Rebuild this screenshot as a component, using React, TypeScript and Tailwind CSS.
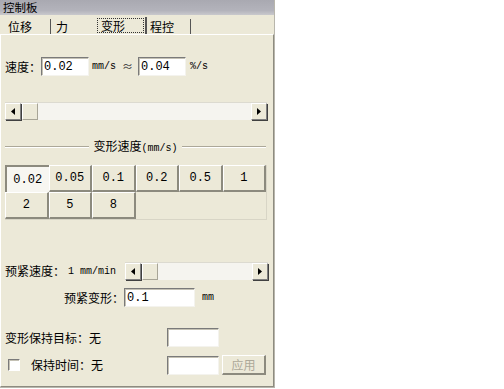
import React from "react";

const cjk = { fontFamily: '"Noto Sans CJK SC", "Liberation Sans", sans-serif' };
const mono = { fontFamily: '"Liberation Mono", "DejaVu Sans Mono", monospace' };

function Input({ w, value }: { w: string; value?: string }) {
  return (
    <div
      className={`${w} shrink-0 h-[19px] bg-white border-t border-l border-t-[#7a7a7a] border-l-[#7a7a7a] border-b border-r border-b-[#f4f3ee] border-r-[#f4f3ee] shadow-[inset_1px_1px_0_#c4c1b4] flex items-center pl-[2px] text-[12px] text-black leading-none`}
      style={mono}
    >
      {value}
    </div>
  );
}

function Arrow({ dir }: { dir: "left" | "right" }) {
  return (
    <div className="w-[16px] h-full bg-[#ece9d8] border-t border-l border-t-white border-l-white border-b border-r border-b-[#808080] border-r-[#808080] shadow-[1px_1px_0_#404040] flex items-center justify-center">
      <svg width="4" height="7" viewBox="0 0 4 7">
        {dir === "left" ? (
          <polygon points="4,0 4,7 0,3.5" fill="#000" />
        ) : (
          <polygon points="0,0 0,7 4,3.5" fill="#000" />
        )}
      </svg>
    </div>
  );
}

function ScrollBar({ w }: { w: string }) {
  return (
    <div className={`${w} shrink-0 h-[18px] flex bg-[#f5f4ef] border-t border-t-[#dcdad0]`}>
      <Arrow dir="left" />
      <div className="w-[16px] h-full ml-[1px] bg-[#ece9d8] border-t border-l border-t-white border-l-white border-b border-r border-b-[#a8a597] border-r-[#a8a597]" />
      <div className="flex-1" />
      <Arrow dir="right" />
    </div>
  );
}

function GridBtn({ label, selected }: { label: string; selected?: boolean }) {
  return (
    <div
      className={
        selected
          ? "h-[27px] bg-[#f7f6f1] border-t-2 border-l-2 border-t-[#8c8a7e] border-l-[#8c8a7e] flex items-center justify-center text-[12px] text-black"
          : "h-[27px] bg-[#ece9d8] border-t border-l border-t-white border-l-white border-b-2 border-r-2 border-b-[#8c8a7e] border-r-[#8c8a7e] flex items-center justify-center text-[12px] text-black"
      }
      style={mono}
    >
      {label}
    </div>
  );
}

export default function App() {
  const vals = ["0.02", "0.05", "0.1", "0.2", "0.5", "1", "2", "5", "8"];
  return (
    <div className="w-[504px] h-[389px] bg-white relative" style={cjk}>
      <div className="w-[275px] h-[388px] bg-[#ece9d8] flex flex-col border-r border-r-[#b8b6ac] border-b border-b-[#b8b6ac]">
        {/* title */}
        <div className="h-[15px] bg-[linear-gradient(#a9a9b1_0%,#b3b3bb_70%,#c9c9cd_100%)] flex items-center pl-[3px] text-[11.5px] leading-[15px] text-black whitespace-nowrap">
          控制板
        </div>
        {/* tabs */}
        <div className="h-[19px] flex items-end text-[12px] leading-none text-black pl-[3px] whitespace-nowrap">
          <div className="w-[48px] h-[15px] flex items-center pl-[5px] border-r border-r-[#555]">位移</div>
          <div className="w-[44px] h-[15px] flex items-center pl-[5px]">力</div>
          <div className="w-[52px] h-[17px] flex items-center border-r-2 border-r-[#555] pl-[2px]">
            <div className="h-[15px] w-[47px] border border-dotted border-[#333] flex items-center pl-[3px]">变形</div>
          </div>
          <div className="w-[44px] h-[15px] flex items-center pl-[3px] border-r border-r-[#555]">程控</div>
        </div>
        {/* content */}
        <div className="flex-1 border-t border-t-white border-l border-l-white border-b border-b-[#8d8b80] border-r border-r-[#8d8b80] flex flex-col pl-[4px] text-[12px] text-black whitespace-nowrap">
          {/* speed row */}
          <div className="mt-[22px] flex items-center h-[19px]">
            <span className="w-[36px] shrink-0">速度：</span>
            <Input w="w-[48px]" value="0.02" />
            <span className="ml-[3px] text-[10px]" style={mono}>mm/s</span>
            <span className="ml-[6px] text-[11px] text-[#333]">≈</span>
            <span className="ml-[5px]" />
            <Input w="w-[48px]" value="0.04" />
            <span className="ml-[4px] text-[10px]" style={mono}>%/s</span>
          </div>
          <div className="mt-[26px]">
            <ScrollBar w="w-[262px]" />
          </div>
          {/* group label */}
          <div className="mt-[20px] w-[261px] h-[14px] flex items-center">
            <div className="flex-1 h-[2px] border-t border-t-[#aca899] border-b border-b-white" />
            <span className="px-[4px] leading-none">
              变形速度<span className="text-[10px]" style={mono}>(mm/s)</span>
            </span>
            <div className="flex-1 h-[2px] border-t border-t-[#aca899] border-b border-b-white" />
          </div>
          {/* grid */}
          <div className="mt-[11px] w-[262px] grid grid-cols-6 border-r border-r-[#d8d5c6] border-b border-b-[#d8d5c6]">
            {vals.map((v, i) => (
              <GridBtn key={v} label={v} selected={i === 0} />
            ))}
          </div>
          {/* prestress speed */}
          <div className="mt-[42px] flex items-center h-[18px]">
            <span className="w-[63px] shrink-0">预紧速度：</span>
            <span className="w-[57px] shrink-0 text-[10px]" style={mono}>1 mm/min</span>
            <ScrollBar w="w-[143px]" />
          </div>
          <div className="mt-[8px] flex items-center h-[19px]">
            <span className="ml-[59px] w-[60px] shrink-0">预紧变形：</span>
            <Input w="w-[71px]" value="0.1" />
            <span className="ml-[7px] text-[10px] text-black" style={mono}>mm</span>
          </div>
          <div className="mt-[21px] flex items-center h-[19px]">
            <span className="w-[162px] shrink-0">变形保持目标：无</span>
            <Input w="w-[52px]" />
          </div>
          <div className="mt-[8px] flex items-center h-[20px]">
            <div className="ml-[3px] shrink-0 w-[12px] h-[12px] bg-white border-t border-l border-t-[#7a7a7a] border-l-[#7a7a7a] border-b border-r border-b-white border-r-white shadow-[inset_1px_1px_0_#c4c1b4]" />
            <span className="ml-[11px] w-[136px] shrink-0">保持时间：无</span>
            <Input w="w-[52px]" />
            <div className="ml-[3px] shrink-0 w-[44px] h-[20px] bg-[#ece9d8] border-t border-l border-t-white border-l-white border-b-2 border-r-2 border-b-[#8c8a7e] border-r-[#8c8a7e] flex items-center justify-center text-[#aca899]">
              应用
            </div>
          </div>
        </div>
      </div>
    </div>
  );
}
